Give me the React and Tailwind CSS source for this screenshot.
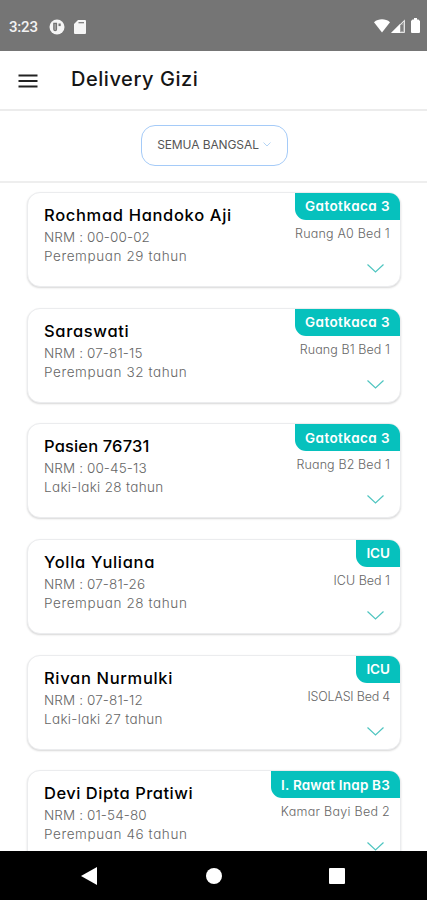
const patients = [
  {
    name: "Rochmad Handoko Aji",
    nrm: "00-00-02",
    info: "Perempuan 29 tahun",
    ward: "Gatotkaca 3",
    room: "Ruang A0 Bed 1",
    roomClass: "tracking-[0.2px]",
  },
  {
    name: "Saraswati",
    nrm: "07-81-15",
    info: "Perempuan 32 tahun",
    ward: "Gatotkaca 3",
    room: "Ruang B1 Bed 1",
    roomClass: "tracking-[0.08px]",
  },
  {
    name: "Pasien 76731",
    nrm: "00-45-13",
    info: "Laki-laki 28 tahun",
    ward: "Gatotkaca 3",
    room: "Ruang B2 Bed 1",
    nameClass: "tracking-[0.15px]",
    infoClass: "tracking-[0.32px]",
    roomClass: "tracking-[0.12px]",
  },
  {
    name: "Yolla Yuliana",
    nrm: "07-81-26",
    info: "Perempuan 28 tahun",
    ward: "ICU",
    room: "ICU Bed 1",
    wardClass: "tracking-normal",
  },
  {
    name: "Rivan Nurmulki",
    nrm: "07-81-12",
    info: "Laki-laki 27 tahun",
    ward: "ICU",
    room: "ISOLASI Bed 4",
    infoClass: "tracking-[0.32px]",
    wardClass: "tracking-normal",
    roomClass: "tracking-[-0.2px]",
  },
  {
    name: "Devi Dipta Pratiwi",
    nrm: "01-54-80",
    info: "Perempuan 46 tahun",
    ward: "I. Rawat Inap B3",
    room: "Kamar Bayi Bed 2",
    nameClass: "tracking-[0.5px]",
    wardClass: "tracking-[0.2px]",
    roomClass: "tracking-[0.28px]",
  },
];

const StatusBar = () => (
  <div className="h-[51px] shrink-0 bg-[#757575] flex items-center pl-[9px] pr-[7px] text-white">
    <span className="w-[30px] pt-0.5 font-[Roboto,sans-serif] text-[15px] leading-5 tracking-[-0.2px] font-medium text-[#f2f2f2]">
      3:23
    </span>
    <svg className="ml-2.5 mt-0.5 size-4" viewBox="0 0 16 16">
      <circle cx="8" cy="8" r="7.5" fill="#f5f5f5" />
      <path
        d="M7.500 4.300H4.800v5.900c0 1 .4 1.500 1.350 1.500s1.350-.5 1.350-1.500z"
        fill="#a3a3a3"
        stroke="#757575"
        strokeWidth="1.200"
      />
      <path d="M9.500 4.500h2.200v2.600H9.500z" fill="#757575" />
    </svg>
    <svg className="ml-[9px] mt-0.5 w-3 h-[14px]" viewBox="0 0 12 14">
      <path d="M4 0h7a1 1 0 0 1 1 1v12a1 1 0 0 1-1 1H1a1 1 0 0 1-1-1V4z" fill="#f5f5f5" />
      <path d="M4.500 2.700h5.500" stroke="#757575" strokeWidth="1.200" />
    </svg>
    <svg className="ml-auto w-4 h-[14px]" viewBox="0 0 16 14">
      <path d="M0 3.200C4.500-.6 11.500-.6 16 3.200L8 13.500z" fill="#fff" />
    </svg>
    <svg className="ml-px mt-px w-[15px] h-[14px]" viewBox="0 0 15 14">
      <path d="M0 14 14 0v14z" fill="#fff" fillOpacity=".3" />
      <path d="M0 14 9 5v9z" fill="#fff" />
      <path d="M1.500 13.400 13.400 1.500v11.900z" fill="none" stroke="#fff" strokeOpacity=".8" />
      <path d="M11 6v6" stroke="#757575" strokeWidth="1.500" />
    </svg>
    <svg className="ml-[5px] w-[9px] h-[15px]" viewBox="0 0 9 15">
      <path d="M3 0h3v1.500h1.500L9 3v11a1 1 0 0 1-1 1H1a1 1 0 0 1-1-1V3l1.500-1.500H3z" fill="#fff" />
    </svg>
  </div>
);

const Header = () => (
  <header className="h-[60px] shrink-0 flex items-center pl-[18px] border-b-2 border-[#ececec]">
    <svg className="mt-0.5 w-[20px] h-[14px]" viewBox="0 0 20 14" stroke="#222" strokeWidth="1.800">
      <path d="M.5 1.500h19M.5 7h19M.5 12.500h19" />
    </svg>
    <h1 className="ml-[33px] -mt-[3px] text-[20px] leading-7 font-medium tracking-[0.55px] text-[#151515]">
      Delivery Gizi
    </h1>
  </header>
);

const WardFilter = () => (
  <div className="h-[72px] shrink-0 flex justify-center pt-[14px] pl-px border-b-2 border-[#eeeeee]">
    <button className="w-[147px] h-[41px] flex items-center justify-center pb-[2px] rounded-[14px] border-[1.5px] border-[#a5cbf8] text-[12px] tracking-[-0.1px] text-[#555] whitespace-nowrap">
      SEMUA BANGSAL
      <svg className="ml-1 w-2 h-[5px]" viewBox="0 0 8 5" fill="none" stroke="#b4d4f5">
        <path d="M.5.5 4 4 7.500.5" />
      </svg>
    </button>
  </div>
);

const PatientCard = ({
  name,
  nrm,
  info,
  ward,
  room,
  nameClass = "tracking-[0.67px]",
  infoClass = "tracking-[0.6px]",
  wardClass = "tracking-[0.43px]",
  roomClass = "tracking-normal",
}) => (
  <div className="h-[95px] shrink-0 flex justify-between rounded-[13px] border-[1.500px] border-[#ebecee] bg-white shadow-[0_1px_2px_rgba(0,0,0,0.16)]">
    <div className="pt-[11px] pl-4 whitespace-nowrap">
      <h2 className={`text-[16.500px] leading-[22px] font-medium text-black ${nameClass}`}>
        {name}
      </h2>
      <p className="text-[13.500px] leading-[22px] tracking-[0.1px] font-light text-[#666]">
        NRM : {nrm}
      </p>
      <p className={`text-[13.500px] leading-[16px] font-light text-[#666] ${infoClass}`}>
        {info}
      </p>
    </div>
    <div className="flex flex-col items-end whitespace-nowrap">
      <span
        className={`h-[27px] px-[10px] flex items-center rounded-tr-[11px] rounded-bl-[11px] bg-[#06c1bd] text-[13.500px] font-semibold text-white ${wardClass}`}
      >
        {ward}
      </span>
      <p className={`mt-1 pr-[10px] text-[12.500px] leading-5 font-light text-[#666] ${roomClass}`}>
        {room}
      </p>
      <svg
        className="mt-5 mr-[16px] w-[17px] h-[9px]"
        viewBox="0 0 17 9"
        fill="none"
        stroke="#4fc5c0"
        strokeWidth="1.200"
      >
        <path d="M.5.5l8 7.500 8-7.500" />
      </svg>
    </div>
  </div>
);

const NavigationBar = () => (
  <nav className="h-[49px] shrink-0 bg-black flex items-center pl-[81px]">
    <svg className="w-4 h-[18px]" viewBox="0 0 16 18" fill="#fff">
      <path d="M16 0v18L0 9z" />
    </svg>
    <span className="ml-[109px] size-4 rounded-full bg-white" />
    <span className="ml-[107px] size-4 rounded-[1px] bg-white" />
  </nav>
);

const App = () => {
  return (
    <div className="w-[427px] h-[900px] flex flex-col overflow-hidden bg-white font-[Inter,sans-serif] [font-feature-settings:'cv11']">
      <StatusBar />
      <Header />
      <WardFilter />
      <main className="flex-1 min-h-0 overflow-hidden flex flex-col gap-[20.700px] pt-[9px] pl-[27px] pr-[26px]">
        {patients.map((patient) => (
          <PatientCard key={patient.name} {...patient} />
        ))}
      </main>
      <NavigationBar />
    </div>
  );
};

export default App;
